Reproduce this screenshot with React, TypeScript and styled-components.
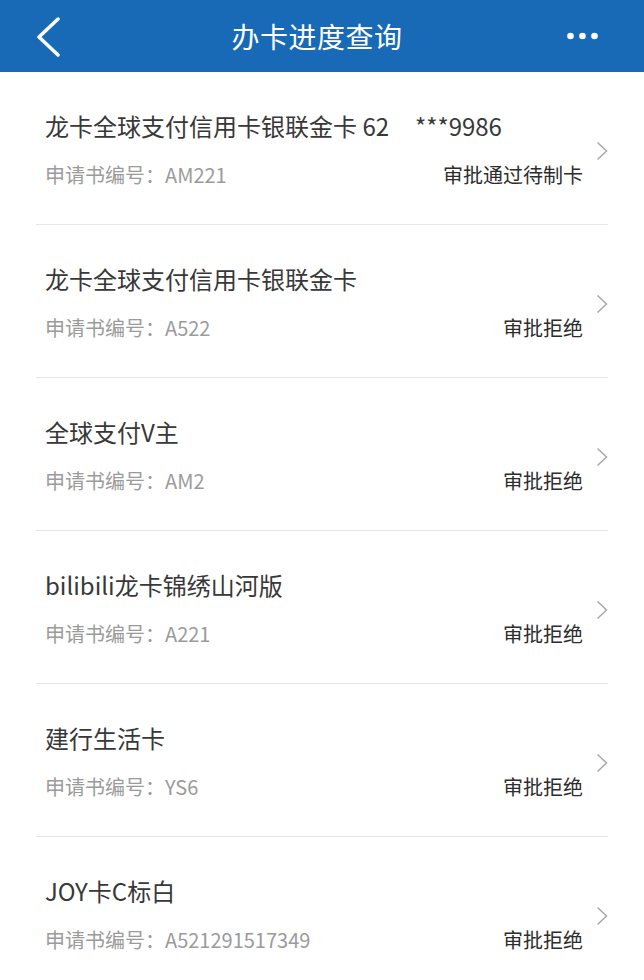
import React from "react";
import styled, { createGlobalStyle } from "styled-components";

const GlobalStyle = createGlobalStyle`
  html, body {
    margin: 0;
    padding: 0;
    background: #ffffff;
  }
  body {
    font-family: "Noto Sans CJK SC", "Noto Sans", "Liberation Sans", sans-serif;
  }
`;

const Page = styled.div`
  width: 644px;
  min-height: 980px;
  background: #ffffff;
`;

const Header = styled.header`
  height: 72px;
  background: #186ab7;
  display: grid;
  grid-template-columns: 1fr auto 1fr;
  align-items: center;
  padding: 0 46px 0 36px;
  box-sizing: border-box;
`;

const Back = styled.button`
  justify-self: start;
  display: flex;
  align-items: center;
  background: none;
  border: 0;
  padding: 0;
  margin-top: 2px;
`;

const Title = styled.h1`
  margin: 0;
  font-size: 28px;
  font-weight: 400;
  color: #ffffff;
  letter-spacing: 0.5px;
`;

const More = styled.button`
  justify-self: end;
  display: flex;
  background: none;
  border: 0;
  padding: 0;
`;

const List = styled.ul`
  list-style: none;
  margin: 0;
  padding: 0;
`;

const Item = styled.li`
  display: flex;
  height: 152px;
  margin: 0 36px;
  border-bottom: 1px solid #e6e6e6;
`;

const Content = styled.div`
  flex: 1;
  padding: 38px 0 0 9px;
`;

const CardName = styled.div`
  font-size: 24px;
  line-height: 32px;
  color: #383838;
  white-space: nowrap;
`;

const Meta = styled.div`
  display: flex;
  justify-content: space-between;
  align-items: center;
  margin-top: 19px;
  font-size: 20px;
  line-height: 28px;
`;

const Number = styled.span`
  color: #9b9b9b;
  white-space: nowrap;
`;

/* blank space where the original screenshot was masked */
const Masked = styled.span<{ $w: number }>`
  display: inline-block;
  width: ${(p) => p.$w}px;
`;

const Status = styled.span`
  color: #2d2d2d;
`;

const Arrow = styled.div`
  align-self: center;
  display: flex;
  margin: 6px 0 0 13px;
`;

type Application = {
  name: string;
  tail?: string;
  gap?: number;
  number: string;
  status: string;
};

const applications: Application[] = [
  { name: "龙卡全球支付信用卡银联金卡 62", tail: "***9986", gap: 26, number: "AM221", status: "审批通过待制卡" },
  { name: "龙卡全球支付信用卡银联金卡", number: "A522", status: "审批拒绝" },
  { name: "全球支付V主", number: "AM2", status: "审批拒绝" },
  { name: "bilibili龙卡锦绣山河版", number: "A221", status: "审批拒绝" },
  { name: "建行生活卡", number: "YS6", status: "审批拒绝" },
  { name: "JOY卡C标白", number: "A521291517349", status: "审批拒绝" },
];

export default function App() {
  return (
    <Page>
      <GlobalStyle />
      <Header>
        <Back aria-label="返回">
          <svg width="26" height="40" viewBox="0 0 26 40">
            <polyline
              points="22,2 3,20 22,38"
              fill="none"
              stroke="#ffffff"
              strokeWidth="3.5"
              strokeLinecap="round"
              strokeLinejoin="round"
            />
          </svg>
        </Back>
        <Title>办卡进度查询</Title>
        <More aria-label="更多">
          <svg width="31" height="8" viewBox="0 0 31 8">
            <circle cx="3.5" cy="4" r="3.3" fill="#ffffff" />
            <circle cx="15.5" cy="4" r="3.3" fill="#ffffff" />
            <circle cx="27.5" cy="4" r="3.3" fill="#ffffff" />
          </svg>
        </More>
      </Header>
      <List>
        {applications.map((app) => (
          <Item key={app.name + app.number}>
            <Content>
              <CardName>
                {app.name}
                {app.tail && (
                  <>
                    <Masked $w={app.gap || 0} />
                    {app.tail}
                  </>
                )}
              </CardName>
              <Meta>
                <Number>申请书编号：{app.number}</Number>
                <Status>{app.status}</Status>
              </Meta>
            </Content>
            <Arrow>
              <svg width="12" height="20" viewBox="0 0 12 20">
                <polyline
                  points="1.5,1.5 10.5,10 1.5,18.5"
                  fill="none"
                  stroke="#a8a8a8"
                  strokeWidth="1.5"
                />
              </svg>
            </Arrow>
          </Item>
        ))}
      </List>
    </Page>
  );
}
